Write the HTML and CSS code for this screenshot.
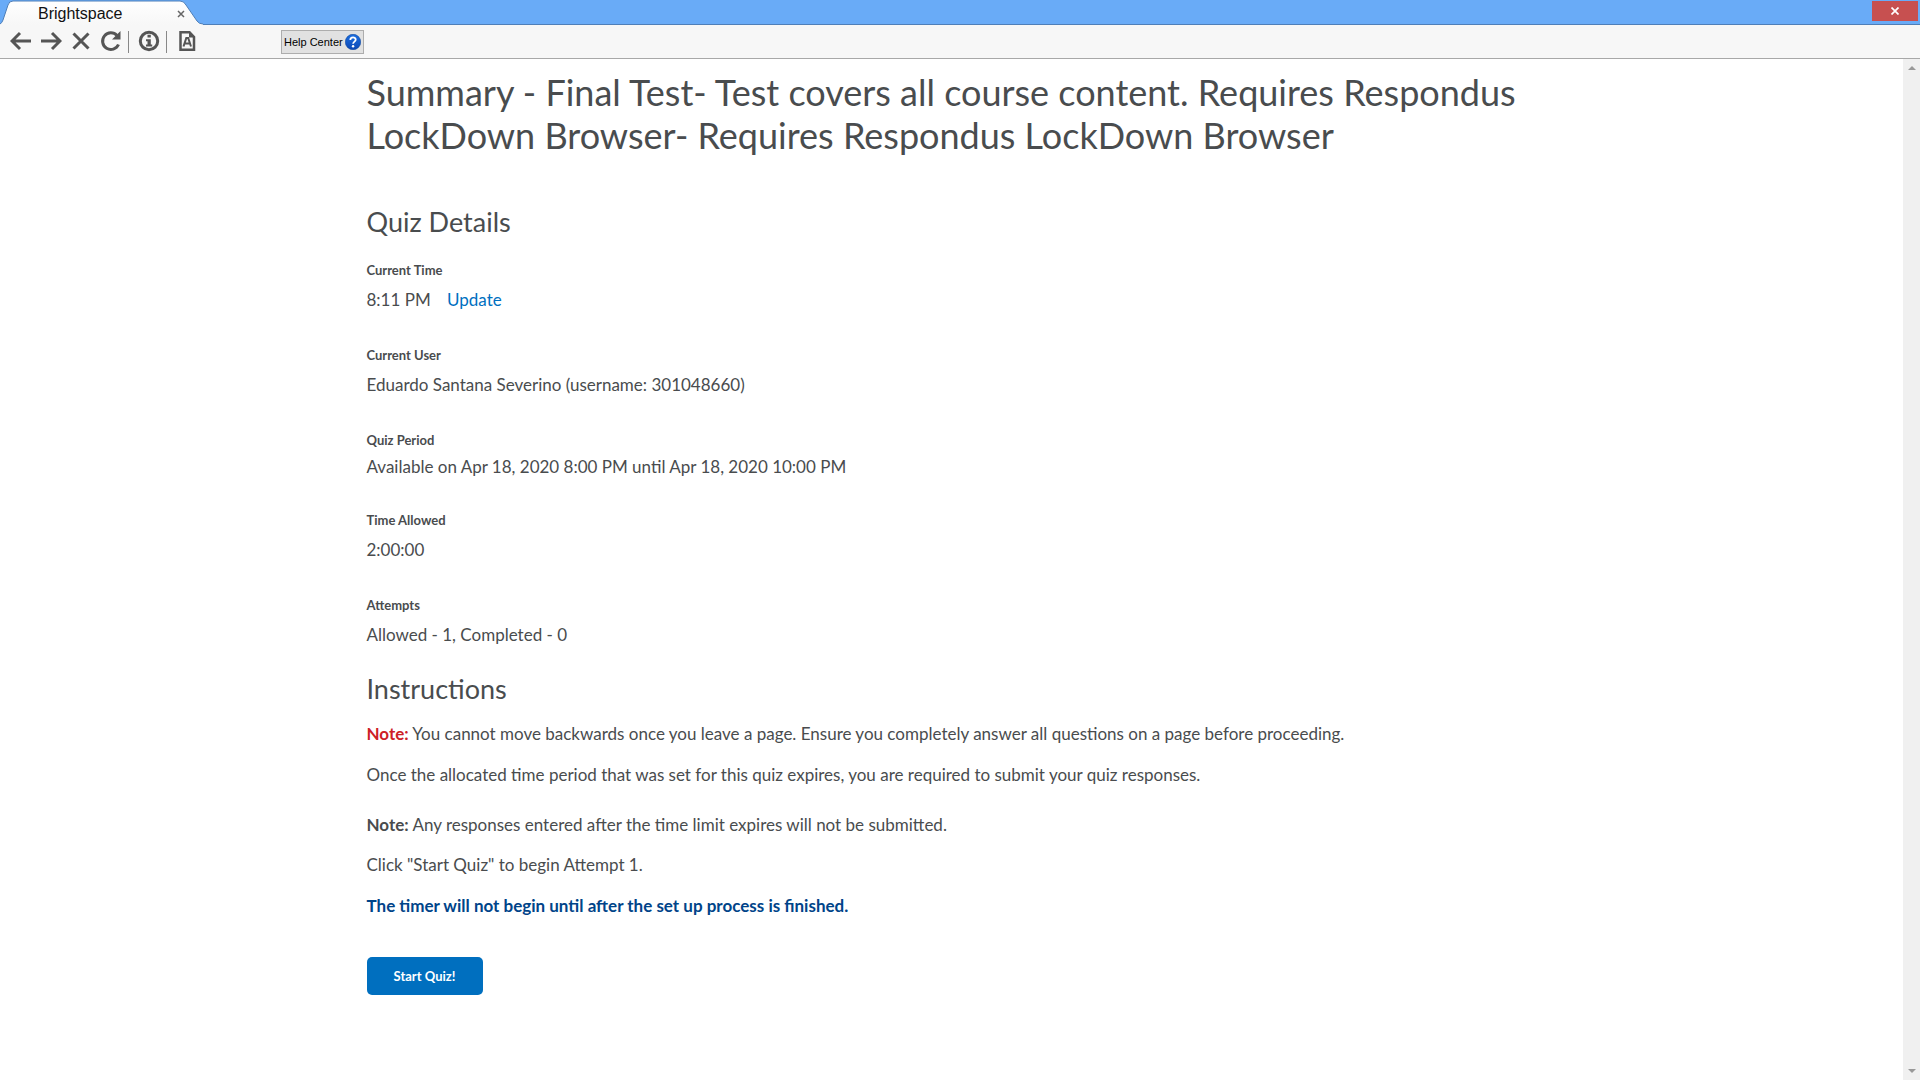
FILE: index.html
```html
<!DOCTYPE html>
<html lang="en">
<head>
<meta charset="utf-8">
<title>Brightspace</title>
<link rel="stylesheet" href="styles.css">
</head>
<body>
<header class="chrome">
  <div class="titlebar">
    <div class="tab">
      <svg class="tab-shape" width="204" height="25" viewBox="0 0 204 25" aria-hidden="true">
        <defs><linearGradient id="tabfill" x1="0" y1="0" x2="0" y2="1"><stop offset="0" stop-color="#fff"/><stop offset="1" stop-color="#f7f7f7"/></linearGradient></defs>
        <path d="M0 25V24Q2 23 3 20L8 5Q9 1 13 1H180Q184 1 186 5L197 21Q199 24 203 24V25Z" fill="url(#tabfill)"/>
        <path d="M0 24Q2 23 3 20L8 5Q9 1 13 1H180Q184 1 186 5L197 21Q199 24 203 24" fill="none" stroke="#4f7fb8"/>
      </svg>
      <span class="tab-title">Brightspace</span>
      <button class="tab-close" type="button" aria-label="Close tab"><svg width="8" height="8" viewBox="0 0 8 8"><path d="M1 1L7 7M7 1L1 7" stroke="#666" stroke-width="1.5"/></svg></button>
    </div>
    <button class="window-close" type="button" aria-label="Close window"><svg width="8" height="8" viewBox="0 0 8 8"><path d="M.5 .5L7.500 7.500M7.500 .5L.5 7.500" stroke="#fff" stroke-width="1.7"/></svg></button>
  </div>
  <nav class="toolbar" aria-label="Browser">
    <button class="tool" type="button" aria-label="Back"><svg width="22" height="22" viewBox="0 0 22 22"><path d="M21 11H2M10 3L2 11L10 19" class="line"/></svg></button>
    <button class="tool" type="button" aria-label="Forward"><svg width="22" height="22" viewBox="0 0 22 22"><path d="M1 11H20M12 3L20 11L12 19" class="line"/></svg></button>
    <button class="tool" type="button" aria-label="Stop"><svg width="22" height="22" viewBox="0 0 22 22"><path d="M3.500 3.500L18.500 18.500M18.500 3.500L3.500 18.500" class="line"/></svg></button>
    <button class="tool" type="button" aria-label="Reload"><svg width="22" height="22" viewBox="0 0 22 22"><path d="M17 5.500A8.300 8.300 0 1 0 18.500 14.500" class="line"/><path d="M20.500 1V9.500H12Z" fill="#555"/></svg></button>
    <span class="divider"></span>
    <button class="tool" type="button" aria-label="Information"><svg width="22" height="22" viewBox="0 0 22 22"><circle cx="11" cy="11" r="8.700" class="line"/><path d="M9.500 4.800H12.800V7.600H9.500ZM8 9.200H12.800V14.500H14.200V16.500H8V14.500H9.500V11.200H8Z" fill="#555"/></svg></button>
    <span class="divider"></span>
    <button class="tool" type="button" aria-label="Text size"><svg width="22" height="22" viewBox="0 0 22 22"><path d="M4.500 2.200H13.500L18 7V19.800H4.500Z" fill="none" stroke="#555" stroke-width="2.500"/><path d="M13 2V7.500H19Z" fill="#555"/><path d="M7.500 16.500L10.300 8H12.200L15 16.500M8.500 13.500H14" fill="none" stroke="#555" stroke-width="2"/></svg></button>
    <button class="help" type="button"><span>Help Center</span><svg width="16" height="16" viewBox="0 0 16 16" aria-hidden="true"><defs><linearGradient id="ball" x1="0" y1="0" x2="0" y2="1"><stop offset="0" stop-color="#1c6fe0"/><stop offset="1" stop-color="#0b47b5"/></linearGradient></defs><circle cx="8" cy="8" r="7.700" fill="url(#ball)" stroke="#0d479e" stroke-width=".6"/><path d="M5.300 6C5.300 2.500 10.800 2.600 10.700 5.700C10.700 7.600 8.100 7.700 8.100 9.800" fill="none" stroke="#fff" stroke-width="1.800"/><circle cx="8.100" cy="12.200" r="1.200" fill="#fff"/></svg></button>
  </nav>
</header>
<div class="viewport">
  <main class="page">
    <h1>Summary - Final Test- Test covers all course content. Requires Respondus LockDown Browser- Requires Respondus LockDown Browser</h1>
    <section class="details">
      <h2>Quiz Details</h2>
      <dl>
        <div class="field"><dt>Current Time</dt><dd>8:11 PM <a class="update" href="#">Update</a></dd></div>
        <div class="field"><dt>Current User</dt><dd>Eduardo Santana Severino (username: 301048660)</dd></div>
        <div class="field compact"><dt>Quiz Period</dt><dd>Available on Apr 18, 2020 8:00 PM until Apr 18, 2020 10:00 PM</dd></div>
        <div class="field"><dt>Time Allowed</dt><dd>2:00:00</dd></div>
        <div class="field"><dt>Attempts</dt><dd>Allowed - 1, Completed - 0</dd></div>
      </dl>
    </section>
    <section class="instructions">
      <h2>Instructions</h2>
      <p><strong class="alert">Note:</strong> You cannot move backwards once you leave a page. Ensure you completely answer all questions on a page before proceeding.</p>
      <p>Once the allocated time period that was set for this quiz expires, you are required to submit your quiz responses.</p>
      <p class="spaced"><strong>Note:</strong> Any responses entered after the time limit expires will not be submitted.</p>
      <p>Click "Start Quiz" to begin Attempt 1.</p>
      <p class="timer">The timer will not begin until after the set up process is finished.</p>
      <button class="start" type="button">Start Quiz!</button>
    </section>
  </main>
  <div class="scrollbar" aria-hidden="true"><span class="arrow up"></span><span class="arrow down"></span></div>
</div>
</body>
</html>
```
FILE: styles.css
```css
* { box-sizing: border-box; }
body {
  margin: 0;
  min-height: 100vh;
  display: flex;
  flex-direction: column;
  background: #fff;
  color: #494c4e;
  font: 17px/24px Lato, "Liberation Sans", sans-serif;
}
button { margin: 0; padding: 0; border: 0; background: none; font: inherit; color: inherit; }
svg { display: block; }
h1, h2, p, dl, dd { margin: 0; }

.titlebar {
  display: flex;
  justify-content: space-between;
  align-items: flex-start;
  height: 25px;
  background: #69abf7;
  border-bottom: 1px solid #4f7fb8;
}
.tab {
  position: relative;
  display: flex;
  align-items: center;
  justify-content: space-between;
  width: 204px;
  height: 25px;
  padding: 2px 19px 0 38px;
  color: #111;
  font: 16px/22px "Liberation Sans", Arial, sans-serif;
}
.tab-shape { position: absolute; inset: 0; }
.tab-title, .tab-close { position: relative; }
.window-close {
  display: grid;
  place-items: center;
  width: 46px;
  height: 20px;
  margin: 1px 2px 0 0;
  background: #c75050;
}

.toolbar {
  display: flex;
  align-items: center;
  height: 34px;
  padding: 0 10px;
  background: #f7f7f7;
  border-bottom: 1px solid #a8a8a8;
}
.tool { margin-right: 8px; padding-bottom: 2px; }
.line { fill: none; stroke: #555; stroke-width: 3; }
.divider { width: 1px; height: 22px; margin: 0 9px 0 -2px; background: #888; }
.help {
  display: flex;
  align-items: center;
  gap: 2px;
  height: 24px;
  margin-left: 75px;
  padding: 0 2px;
  border: 1px solid #adadad;
  background: #e1e1e1;
  color: #000;
  font: 11px/16px "Liberation Sans", Arial, sans-serif;
}

.viewport { flex: 1; display: flex; }
.page { flex: 1; max-width: 1170px; margin: 0 auto; padding: 12px 0 40px; }
h1 { font-size: 36px; line-height: 43px; font-weight: 400; }
h2 { font-size: 27px; line-height: 32px; font-weight: 400; }
.details { margin-top: 49px; }
.field { margin-top: 22px; padding-bottom: 11px; }
dt { font-size: 13px; line-height: 20px; font-weight: 700; }
dd { margin-top: 8px; }
.compact { padding-bottom: 9px; }
.compact dd { margin-top: 5px; }
.update { margin-left: 12px; color: #006fbf; text-decoration: none; }
.instructions { margin-top: 15px; }
.instructions h2 { margin-bottom: 17px; }
.instructions p { margin-bottom: 17px; }
.instructions .spaced { margin-top: 26px; margin-bottom: 16px; }
.alert { color: #cd2026; }
.timer { color: #004489; font-weight: 700; }
.start {
  width: 116px;
  height: 38px;
  margin-top: 22px;
  border-radius: 5px;
  background: #006fbf;
  color: #fff;
  font-size: 13px;
  line-height: 20px;
  font-weight: 700;
}

.scrollbar {
  display: flex;
  flex-direction: column;
  align-items: center;
  justify-content: space-between;
  width: 17px;
  padding: 7px 0;
  background: #f0f0f0;
}
.arrow { border: 4px solid transparent; }
.up { border-top: 0; border-bottom-color: #999; }
.down { border-bottom: 0; border-top-color: #999; }
```
